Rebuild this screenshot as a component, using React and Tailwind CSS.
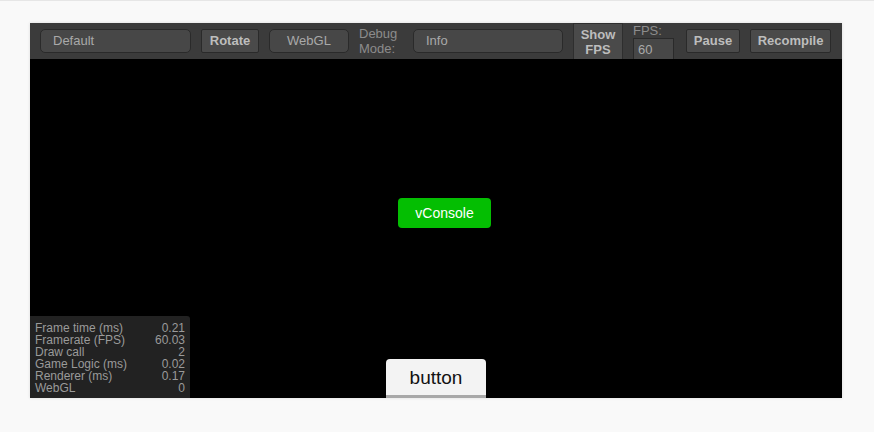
import React from "react";

const stats = [
  ["Frame time (ms)", "0.21"],
  ["Framerate (FPS)", "60.03"],
  ["Draw call", "2"],
  ["Game Logic (ms)", "0.02"],
  ["Renderer (ms)", "0.17"],
  ["WebGL", "0"],
];

const font = { fontFamily: '"Liberation Sans", Arial, sans-serif' };

const App = () => {
  return (
    <div className="w-[874px] h-[432px] bg-[#f9f9f9] border-t border-[#e6e6e6] pt-[22px] pl-[30px]" style={font}>
      <div className="w-[812px] h-[375px] flex flex-col shadow-[0_0_3px_rgba(0,0,0,0.12)]">
        {/* toolbar */}
        <div className="h-[36px] bg-[#3b3b3b] flex items-center pl-[10px] text-[13px] text-[#a9a9a9]">
          <div className="w-[151px] h-[24px] rounded-[5px] border border-[#2a2a2a] bg-[#474747] pl-[12px] flex items-center">
            Default
          </div>
          <div className="ml-[10px] w-[58px] h-[24px] rounded-[2px] border border-[#2a2a2a] bg-[#4a4a4a] flex items-center justify-center font-bold text-[#bdbdbd]">
            Rotate
          </div>
          <div className="ml-[10px] w-[80px] h-[24px] rounded-[5px] border border-[#2a2a2a] bg-[#474747] flex items-center justify-center">
            WebGL
          </div>
          <div className="ml-[10px] w-[46px] leading-[15px] text-[#8c8c8c]">
            Debug
            <br />
            Mode:
          </div>
          <div className="ml-[8px] w-[150px] h-[24px] rounded-[5px] border border-[#2a2a2a] bg-[#474747] pl-[12px] flex items-center">
            Info
          </div>
          <div className="ml-[10px] w-[50px] h-[37px] self-start bg-[#4a4a4a] border border-[#2e2e2e] flex flex-col items-center justify-center leading-[15px] font-bold text-[#bdbdbd]">
            <span>Show</span>
            <span>FPS</span>
          </div>
          <div className="ml-[10px] self-start flex flex-col">
            <span className="leading-[13px] text-[#8c8c8c] mt-[1px]">FPS:</span>
            <div className="mt-[1px] w-[41px] h-[23px] bg-[#474747] border border-[#2a2a2a] pl-[4px] flex items-center">
              60
            </div>
          </div>
          <div className="ml-[12px] w-[54px] h-[24px] rounded-[2px] border border-[#2a2a2a] bg-[#4a4a4a] flex items-center justify-center font-bold text-[#bdbdbd]">
            Pause
          </div>
          <div className="ml-[10px] w-[81px] h-[24px] rounded-[2px] border border-[#2a2a2a] bg-[#4a4a4a] flex items-center justify-center font-bold text-[#bdbdbd]">
            Recompile
          </div>
        </div>

        {/* canvas */}
        <div className="relative flex-1 bg-black">
          <div className="absolute left-[368px] top-[139px] w-[93px] h-[30px] rounded-[4px] bg-[#04be02] text-white text-[14px] flex items-center justify-center">
            vConsole
          </div>

          <div className="absolute left-0 bottom-0 w-[160px] h-[82px] bg-[#222222] rounded-tr-[3px] px-[5px] pt-[6px] text-[12px] leading-[12px] text-[#9a9a9a]">
            {stats.map(([label, value]) => (
              <div key={label} className="flex justify-between">
                <span>{label}</span>
                <span>{value}</span>
              </div>
            ))}
          </div>

          <div className="absolute left-[356px] bottom-0 w-[100px] h-[39px] rounded-t-[4px] bg-[#f3f3f3] border-b-[3px] border-[#a8a8a8] flex items-center justify-center pt-[2px] text-[19px] text-[#111]">
            button
          </div>
        </div>
      </div>
    </div>
  );
};

export default App;
